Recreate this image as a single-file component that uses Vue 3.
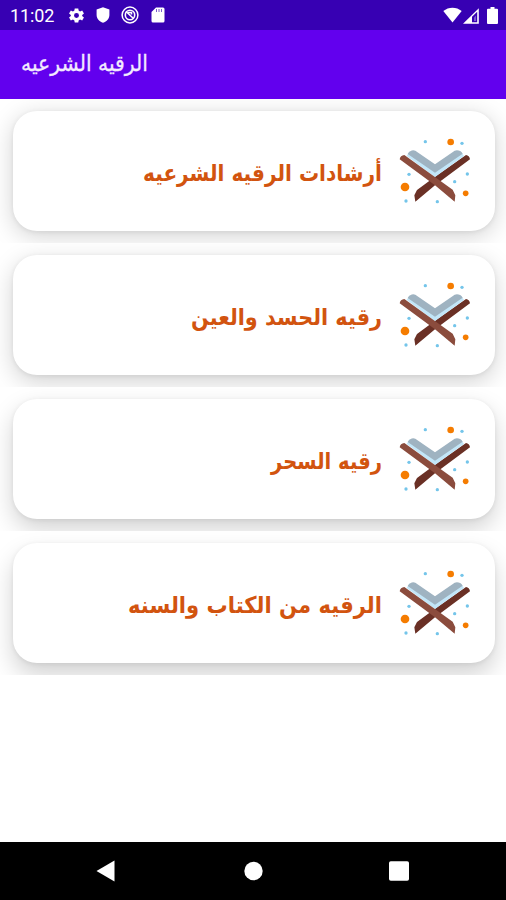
<script setup>
const items = [
  { text: 'أرشادات الرقيه الشرعيه', width: 239, depth: '5px' },
  { text: 'رقيه الحسد والعين', width: 191, depth: '7px' },
  { text: 'رقيه السحر', width: 111, depth: '10px' },
  { text: 'الرقيه من الكتاب والسنه', width: 254, depth: '12px' }
]
</script>

<template>
  <div class="screen">
    <div class="status">
      <span class="clock">11:02</span>
      <svg class="icon gear" viewBox="0 0 24 24"><path fill="#fff" fill-rule="evenodd" d="M9.5 2h5l.5 3 2 1.200 3-1.200 2.500 4.300-2.500 1.900v1.600l2.500 1.900-2.500 4.300-3-1.200-2 1.200-.5 3h-5L9 19l-2-1.200L4 19l-2.500-4.300L4 12.800v-1.600L1.500 9.300 4 5l3 1.200L9 5zM12 8.500a3.500 3.500 0 1 0 0 7a3.500 3.500 0 1 0 0-7z" /></svg>
      <svg class="icon shield" viewBox="0 0 14 16"><path fill="#fff" d="M7 0.200 13.400 2.500V8c0 3.600-2.600 6.600-6.400 7.800C3.200 14.600.6 11.600.6 8V2.500z" /></svg>
      <svg class="icon ring" viewBox="0 0 18 18" fill="none" stroke="#fff">
        <circle cx="9" cy="9" r="7.900" stroke-width="1.500" />
        <circle cx="9" cy="9" r="4.700" stroke-width="1.600" />
        <path d="M5 5.500 12.500 12.500M7 6.500h3.500v2" stroke-width="1.600" />
      </svg>
      <svg class="icon card-sd" viewBox="0 0 14 16"><path fill="#fff" d="M5 .5h7q1.500 0 1.500 1.500v12q0 1.500-1.500 1.500H2Q.5 15.500.5 14V5z" /><path stroke="#3700b3" stroke-opacity=".65" d="M5.500 2v3M8 2v3M10.500 2v3" /></svg>
      <span class="spacer"></span>
      <svg class="icon wifi" viewBox="0 0 19 16"><path fill="#fff" d="M0.300 4C5.500-.5 13.500-.5 18.700 4L9.500 15.500z" /></svg>
      <svg class="icon signal" viewBox="0 0 16 16"><path fill="#fff" fill-rule="evenodd" d="M0 15.800 15.800.2V15.800zM9 8.800v5.400h5.200V3.800z" /><path fill="#fff" d="M11 9.500 13 7.500V13h-2z" opacity=".35" /></svg>
      <svg class="icon battery" viewBox="0 0 11 17"><path fill="#fff" d="M3.500 0h4v1.700H10q1 0 1 1V16q0 1-1 1H1q-1 0-1-1V2.700q0-1 1-1h2.500z" /></svg>
    </div>

    <header class="appbar">
      <svg class="title" width="127" height="40">
        <text x="0" y="27" direction="ltr" textLength="127" lengthAdjust="spacingAndGlyphs">الرقيه الشرعيه</text>
      </svg>
    </header>

    <main class="list">
      <div v-for="item in items" :key="item.text" class="row">
        <div class="card" :style="{ '--depth': item.depth }">
          <svg class="label" :width="item.width" height="60">
            <text x="0" y="40" direction="ltr" :textLength="item.width" lengthAdjust="spacingAndGlyphs">{{ item.text }}</text>
          </svg>
          <svg class="book" viewBox="3 -3 240 240">
            <path fill="#6a3025" d="M213 69Q223 70 225 82L120 160 61 209 58 190 66 174 120 134z" />
            <path fill="#c2e6f8" d="M35 72 44 58 120 110 197 58 207 72 120 135z" />
            <path fill="#9fb3c1" d="M38 66Q47 52 61 56L120 97 179 56Q194 52 203 65L120 122z" />
            <path fill="#8b4c3d" d="M28 69Q16 70 14 82L120 160 179 209 181 190 173 173z" />
            <g fill="#f57c00"><circle cx="167" cy="30" r="10" /><circle cx="30" cy="165" r="13" /><circle cx="212" cy="184" r="8.500" /></g>
            <g fill="#74c5ea"><circle cx="91" cy="29" r="5" /><circle cx="201" cy="34" r="5" /><circle cx="42" cy="127" r="5" /><circle cx="217" cy="126" r="5" /><circle cx="179" cy="149" r="5" /><circle cx="33" cy="207" r="5" /><circle cx="127" cy="209" r="5" /></g>
          </svg>
        </div>
      </div>
    </main>

    <nav class="nav">
      <svg viewBox="0 0 20 22"><path fill="#fff" d="M.5 11 18.500.5v21z" /></svg>
      <svg viewBox="0 0 20 22"><circle cx="10.500" cy="11" r="9.200" fill="#fff" /></svg>
      <svg viewBox="0 0 20 22"><rect x="0" y="1.200" width="20" height="19.600" rx="1.800" fill="#fff" /></svg>
    </nav>
  </div>
</template>

<style>
body { background: #fff; }
</style>

<style scoped>
.screen { width: 506px; height: 900px; display: flex; flex-direction: column; overflow: hidden; background: #fff; }
.status { height: 30px; flex: none; box-sizing: border-box; background: #3700b3; display: flex; align-items: center; padding: 0 8px 0 10px; color: #fff; }
.clock { font: 400 18px/30px Roboto, sans-serif; width: 58px; flex: none; padding-top: 2px; letter-spacing: -.1px; }
.icon { display: block; flex: none; }
.gear { width: 17px; height: 17px; }
.shield { width: 14px; height: 16px; margin-left: 11px; }
.ring { width: 18px; height: 18px; margin-left: 11px; }
.card-sd { width: 14px; height: 16px; margin-left: 12px; }
.spacer { flex: 1; }
.wifi { width: 19px; height: 16px; }
.signal { width: 16px; height: 16px; margin: 1px 8px 0 1px; }
.battery { width: 11px; height: 17px; }
.appbar { height: 68.500px; flex: none; background: #6200ee; display: flex; align-items: center; padding-left: 21px; }
.title { display: block; overflow: visible; }
.title text { font: 22px "DejaVu Sans", sans-serif; fill: #f3eaff; stroke: #f3eaff; stroke-width: .3px; }
.list { flex: 1; }
.row { height: 144px; box-sizing: border-box; padding: 12px 11px 12px 12.500px; overflow: hidden; background: #fff; }
.card { height: 120px; box-sizing: border-box; border-radius: 24px; background: #fff; display: flex; align-items: center; justify-content: flex-end; padding-right: 19px; box-shadow: 0 var(--depth) 24px rgba(0, 0, 0, .18), 0 1px 5px rgba(0, 0, 0, .07); }
.label { display: block; overflow: visible; margin-right: 14px; }
.label text { font: bold 23px "DejaVu Sans", sans-serif; fill: #d2540f; }
.book { display: block; width: 80px; height: 80px; }
.nav { height: 58.500px; flex: none; background: #000; display: flex; align-items: center; justify-content: space-between; padding: 0 97px 0 96px; }
.nav svg { display: block; width: 20px; height: 22px; }
</style>
